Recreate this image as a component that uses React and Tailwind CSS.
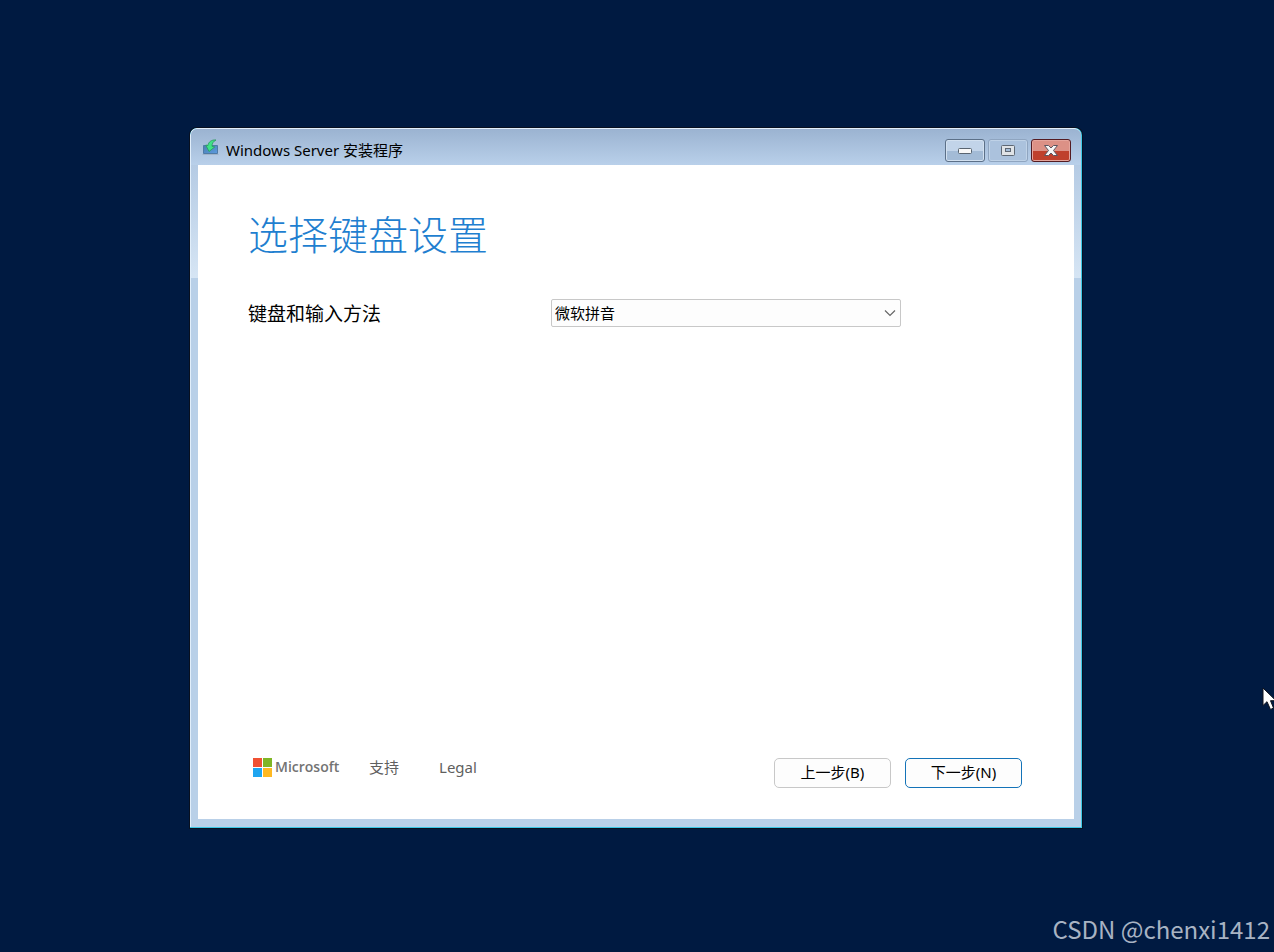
import { useState } from "react";

const METHODS = ["微软拼音", "微软五笔"];

function SetupIcon() {
  return (
    <svg width="18" height="18" viewBox="0 0 18 18">
      <defs>
        <linearGradient id="box" x1="0" y1="0" x2="1" y2="1">
          <stop offset="0" stopColor="#4a7fae" />
          <stop offset="1" stopColor="#5c9be0" />
        </linearGradient>
      </defs>
      <path d="M1.5 6.500h14v8h-14z" fill="url(#box)" stroke="#4f7ba6" />
      <path d="M0.5 15.5h16" stroke="#9fb3c8" />
      <path
        d="M14 1C9.500 0.500 6.300 3 6 6.500L3.800 6L7 12.500L12.700 8L10 7.300C10 4.500 11.300 2.300 14 1z"
        fill="#3fe287"
        stroke="#2a9a5c"
        strokeWidth="0.8"
      />
    </svg>
  );
}

function MicrosoftLogo() {
  return (
    <svg className="shrink-0" width="19" height="19" viewBox="0 0 19 19">
      <path d="M0 0h9v9H0z" fill="#f05133" />
      <path d="M10 0h9v9h-9z" fill="#7fb525" />
      <path d="M0 10h9v9H0z" fill="#1fa5f0" />
      <path d="M10 10h9v9h-9z" fill="#ffb922" />
    </svg>
  );
}

function TitleBar() {
  return (
    <header className="flex h-9 shrink-0 items-center bg-linear-to-b from-[#9bb3d1] to-[#b9d0ea] pl-[11px] pr-[10px] pt-[6px]">
      <span className="-mt-1">
        <SetupIcon />
      </span>
      <h1 className="ml-[6px] flex-1 text-[15px] leading-5 text-black">Windows Server 安装程序</h1>
      <div className="flex gap-[3px]">
        <button
          aria-label="Minimize"
          className="flex h-[23px] w-10 items-center justify-center rounded-[3px] border border-[#5c7088] bg-linear-to-b from-[#c2d4e9] from-50% to-[#a3bbd6] to-50% shadow-[inset_0_0_0_1px_#d3e1f0]"
        >
          <svg width="16" height="8" viewBox="0 0 16 8">
            <rect x="1.500" y="2.500" width="13" height="5" rx="1" fill="#f8f8f8" stroke="#596470" />
          </svg>
        </button>
        <button
          aria-label="Maximize"
          disabled
          className="flex h-[23px] w-10 items-center justify-center rounded-[3px] border border-[#8fa5c0] bg-[#abc2dd] shadow-[inset_0_0_0_1px_#bfd2e7]"
        >
          <svg width="16" height="13" viewBox="0 0 16 13">
            <rect x="1.500" y="1.500" width="13" height="10" rx="1" fill="#dfe3e7" stroke="#5e6874" />
            <rect x="5.500" y="4.500" width="5" height="3" fill="#a5bdd8" stroke="#5e6874" />
          </svg>
        </button>
        <button
          aria-label="Close"
          className="flex h-[23px] w-10 items-center justify-center rounded-[3px] border border-[#541c22] bg-linear-to-b from-[#dc9186] from-50% to-[#bf402c] to-50% shadow-[inset_0_0_0_1px_#e5a59c]"
        >
          <svg width="16" height="13" viewBox="0 0 16 13">
            <path
              d="M1.500 1.500h4L8 4l2.500-2.500h4L10.500 6.500l4 5h-4L8 9l-2.500 2.500h-4L5.500 6.500z"
              fill="#f7f7f7"
              stroke="#5b5560"
              strokeLinejoin="round"
            />
          </svg>
        </button>
      </div>
    </header>
  );
}

function Cursor() {
  return (
    <svg className="absolute right-0 top-[687px]" width="12" height="25" viewBox="0 0 12 25">
      <path
        d="M1 1V18.500L5 14.700L8.500 22.500L11.500 21L8.500 13.700H14z"
        fill="#fff"
        stroke="#10131c"
      />
    </svg>
  );
}

export default function App() {
  const [method, setMethod] = useState(METHODS[0]);

  return (
    <div className="relative flex min-h-screen flex-col bg-[#001a41] pl-[190px] pr-48 pt-32 font-['Noto_Sans','Noto_Sans_CJK_SC',sans-serif]">
      {/* the frame has a light edge top left and a cyan one bottom right */}
      <div className="flex flex-1 flex-col overflow-hidden rounded-t-[7px] bg-[#3cc8e6] pb-px pr-px shadow-[0_0_0_1px_#08101f]">
        <div className="flex flex-1 flex-col overflow-hidden rounded-t-[7px] border-l border-t border-[#e1eefa] bg-[#b9d0e8]">
          <TitleBar />
          <div className="flex flex-1 flex-col bg-linear-to-b from-[#b5cbe4] to-[#d6e5f4] bg-size-[100%_113px] bg-no-repeat px-[7px] pb-2">
            <main className="flex flex-1 flex-col bg-white pb-[31px] pl-[50px] pr-[52px] pt-[42px]">
              <h2 className="font-['Noto_Sans_CJK_SC',sans-serif] text-[40px] font-light leading-[52px] text-[#1f7fd0]">
                选择键盘设置
              </h2>
              <div className="mt-10 flex items-center">
                <label
                  htmlFor="method"
                  className="w-[303px] font-['Noto_Sans_CJK_SC',sans-serif] text-[19px] leading-7 text-black"
                >
                  键盘和输入方法
                </label>
                <div className="grid max-w-[350px] flex-1 items-center">
                  <select
                    id="method"
                    value={method}
                    onChange={(e) => setMethod(e.target.value)}
                    className="col-start-1 row-start-1 h-7 w-full appearance-none rounded-[2px] border border-[#c8c8c8] bg-[#fdfdfd] px-[3px] text-[15px] text-black"
                  >
                    {METHODS.map((m) => (
                      <option key={m}>{m}</option>
                    ))}
                  </select>
                  <svg
                    className="pointer-events-none col-start-1 row-start-1 mr-[5px] justify-self-end"
                    width="12"
                    height="8"
                    viewBox="0 0 12 8"
                  >
                    <path d="M1 1.500L6 6.500L11 1.500" fill="none" stroke="#666" strokeWidth="1.200" />
                  </svg>
                </div>
              </div>
              <footer className="mt-auto flex items-end text-[15px] leading-5">
                <div className="mb-[11px] flex flex-1 items-center text-[#5f5f5f]">
                  <div className="ml-[5px] flex w-[86px] items-center gap-[3px]">
                    <MicrosoftLogo />
                    <span className="font-['Open_Sans',sans-serif] text-sm font-semibold text-[#737373]">
                      Microsoft
                    </span>
                  </div>
                  <a href="#support" className="ml-[30px]">
                    支持
                  </a>
                  <a href="#legal" className="ml-10">
                    Legal
                  </a>
                </div>
                <div className="flex gap-[14px]">
                  <button className="h-[30px] w-[117px] rounded-[5px] border border-[#c8c8c8] bg-[#fdfdfd] pb-[2px] text-black">
                    上一步(B)
                  </button>
                  <button className="h-[30px] w-[117px] rounded-[5px] border border-[#1473b8] bg-[#fdfdfd] pb-[2px] text-black">
                    下一步(N)
                  </button>
                </div>
              </footer>
            </main>
          </div>
        </div>
      </div>
      <p className="-mr-48 flex h-[124px] items-end justify-end pb-[9px] pr-1 font-['Noto_Sans_CJK_SC',sans-serif] text-2xl leading-7 text-[#a8b3c3]">
        CSDN @chenxi1412
      </p>
      <Cursor />
    </div>
  );
}
